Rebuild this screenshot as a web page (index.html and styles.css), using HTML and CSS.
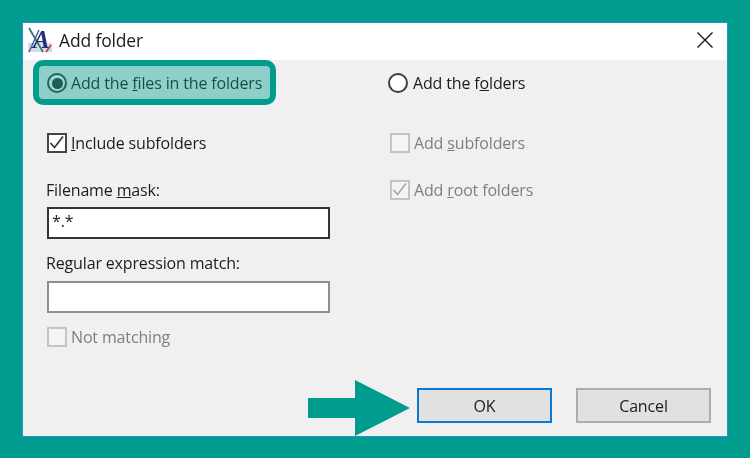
FILE: index.html
```html
<!DOCTYPE html>
<html>
  <head>
    <meta http-equiv="content-type" content="text/html; charset=utf-8" />
    <title>Add folder</title>
    <link rel="stylesheet" href="styles.css">
  </head>
  <body>
    <div class="frame">
      <div class="dialog">
        <div class="titlebar">
          <svg class="app_icon" viewBox="0 0 26 26" width="26" height="26">
            <rect x="1" y="16" width="24" height="9" fill="#d5dbe8" />
            <path d="M2 1 L16 25" stroke="#2f7f6a" stroke-width="1.8" fill="none" />
            <path d="M2 25 L12 3" stroke="#4a5a8c" stroke-width="1.4" fill="none" />
            <path d="M19 25 L24 18" stroke="#c0453f" stroke-width="1.8" fill="none" />
            <text x="6" y="21" class="app_letter">A</text>
          </svg>
          <span class="title">Add folder</span>
          <svg class="close" viewBox="0 0 16 16" width="16" height="16">
            <path d="M0.5 0.5 L15.5 15.5 M15.5 0.5 L0.5 15.5" stroke="#111" stroke-width="1.3" fill="none" />
          </svg>
        </div>
        <div class="content">
          <div class="columns">
            <div class="col col_left">
              <div class="row row_radio highlighted">
                <span class="radio radio_on"></span>
                <span>Add the <u>f</u>iles in the folders</span>
                <div class="highlight"></div>
              </div>
              <div class="row row_first">
                <span class="check">
                  <svg viewBox="0 0 20 20" width="20" height="20"><path d="M3.5 10 L7.5 14.5 L16 3.5" stroke="#333" stroke-width="1.7" fill="none" /></svg>
                </span>
                <span><u>I</u>nclude subfolders</span>
              </div>
              <div class="label label_first">Filename <u>m</u>ask:</div>
              <div class="input input_focus">*.*</div>
              <div class="label">Regular expression match:</div>
              <div class="input"></div>
              <div class="row row_last disabled">
                <span class="check"></span>
                <span>Not matching</span>
              </div>
            </div>
            <div class="col col_right">
              <div class="row row_radio">
                <span class="radio"></span>
                <span>Add the f<u>o</u>lders</span>
              </div>
              <div class="row row_first disabled">
                <span class="check"></span>
                <span>Add <u>s</u>ubfolders</span>
              </div>
              <div class="row row_second disabled">
                <span class="check">
                  <svg viewBox="0 0 20 20" width="20" height="20"><path d="M3.5 10 L7.5 14.5 L16 3.5" stroke="#a8a8a8" stroke-width="1.7" fill="none" /></svg>
                </span>
                <span>Add <u>r</u>oot folders</span>
              </div>
            </div>
          </div>
          <div class="buttons">
            <div class="btn_wrap">
              <svg class="arrow" viewBox="0 0 102 56" width="102" height="56">
                <path d="M0 18 H47 V0 L102 28 L47 56 V38 H0 Z" fill="#009d8e" />
              </svg>
              <button class="btn btn_default">OK</button>
            </div>
            <button class="btn">Cancel</button>
          </div>
        </div>
      </div>
    </div>
  </body>
</html>
```

FILE: styles.css
```css
body, html {
  margin: 0;
  padding: 0;
  background: white;
}

body {
  font-family: "Open Sans", "Noto Sans", sans-serif;
  font-size: 16px;
  letter-spacing: -0.15px;
  color: #1c1c1c;
}

.frame {
  box-sizing: border-box;
  height: 458px;
  padding: 22px;
  background: #009d8e;
}

.dialog {
  box-sizing: border-box;
  height: 415px;
  background: #f0f0f0;
  border: 1px solid #2b8fd8;
  display: flex;
  flex-direction: column;
  filter: blur(0.3px);
}

.titlebar {
  box-sizing: border-box;
  height: 37px;
  flex: none;
  background: white;
  display: flex;
  align-items: center;
  padding: 0 14px 3px 4px;
}

.app_icon {
  flex: none;
}

.app_letter {
  font-family: "Liberation Serif", serif;
  font-style: italic;
  font-weight: bold;
  font-size: 25px;
  fill: #1f2f7a;
}

.title {
  margin-left: 6px;
  flex: 1;
  font-size: 17.5px;
}

.close {
  flex: none;
}

.content {
  flex: 1;
  display: flex;
  flex-direction: column;
  justify-content: space-between;
  padding: 13px 16px 13px 24px;
}

.columns {
  display: flex;
}

.col {
  display: flex;
  flex-direction: column;
}

.col_left {
  width: 341px;
  flex: none;
}

.row {
  display: flex;
  align-items: center;
  gap: 4px;
  height: 20px;
  white-space: nowrap;
}

.highlighted {
  position: relative;
}

.highlight {
  position: absolute;
  left: -14px;
  top: -13px;
  width: 243px;
  height: 45px;
  box-sizing: border-box;
  border: 6px solid #009d8e;
  border-radius: 10px;
  background: rgba(0, 157, 142, 0.4);
}

.row_first {
  margin-top: 40px;
}

.row_second {
  margin-top: 27px;
}

.row_last {
  margin-top: 14px;
}

.disabled {
  color: #7f7f7f;
}

.col_right .row_radio {
  gap: 5px;
}

.col_right .row_first,
.col_right .row_second {
  margin-left: 2px;
}

.radio {
  box-sizing: border-box;
  width: 20px;
  height: 20px;
  flex: none;
  border: 2px solid #3c3c3c;
  border-radius: 50%;
  background: white;
  display: flex;
  align-items: center;
  justify-content: center;
}

.radio_on::after {
  content: "";
  width: 11px;
  height: 11px;
  border-radius: 50%;
  background: #333;
}

.check {
  box-sizing: border-box;
  width: 20px;
  height: 20px;
  flex: none;
  border: 2px solid #444;
  background: white;
  display: flex;
  align-items: center;
  justify-content: center;
}

.check svg {
  flex: none;
}

.disabled .check {
  border-color: #c4c4c4;
  background: #f4f4f4;
}

.label {
  height: 20px;
  line-height: 20px;
  margin-top: 14px;
  margin-left: -1px;
  white-space: nowrap;
}

.label_first {
  margin-top: 27px;
}

.input {
  box-sizing: border-box;
  width: 283px;
  height: 32px;
  margin-top: 8px;
  padding: 0 0 0 3px;
  border: 2px solid #8f8f8f;
  background: white;
  line-height: 24px;
}

.input_focus {
  margin-top: 7px;
  border-color: #333;
}

.buttons {
  display: flex;
  justify-content: flex-end;
  gap: 24px;
}

.btn_wrap {
  position: relative;
  display: flex;
}

.arrow {
  position: absolute;
  right: 142px;
  top: -8px;
}

.btn {
  box-sizing: border-box;
  width: 135px;
  height: 35px;
  padding: 0;
  border: 2px solid #adadad;
  background: #e1e1e1;
  font: inherit;
  letter-spacing: inherit;
  color: #1c1c1c;
}

.btn_default {
  border-color: #0a78d7;
}
```
